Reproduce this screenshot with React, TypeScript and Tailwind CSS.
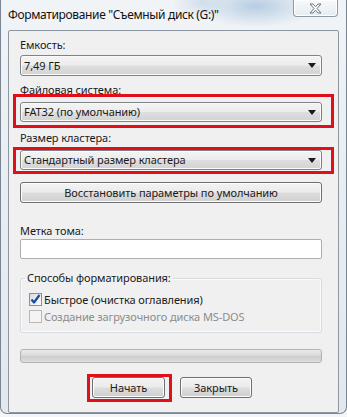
const font = "font-['Noto_Sans',_'Liberation_Sans',_sans-serif] text-[11px] tracking-[-0.1px] leading-[14px] text-[#1b1b1b]";

const Combo = ({ value, h = "h-[20px]" }: { value: string; h?: string }) => (
  <div
    className={`${h} flex items-center justify-between rounded-[3px] border border-[#7f8388] bg-[linear-gradient(#f4f4f4,#ececec_48%,#dedede_52%,#d3d3d3)] pl-[3px] pr-[5px] shadow-[inset_0_0_0_1px_#fafafa]`}
  >
    <span>{value}</span>
    <svg width="8" height="5" viewBox="0 0 8 5">
      <path d="M0 0h8L4 5z" fill="#1a1a1a" />
    </svg>
  </div>
);

const Button = ({ label, className = "" }: { label: string; className?: string }) => (
  <div
    className={`flex h-[21px] items-center justify-center rounded-[3px] border border-[#707070] bg-[linear-gradient(#f3f3f3,#ebebeb_48%,#dddddd_52%,#cfcfcf)] shadow-[inset_0_0_0_1px_#fcfcfc] ${className}`}
  >
    {label}
  </div>
);

const Check = ({ checked, disabled }: { checked?: boolean; disabled?: boolean }) => (
  <div
    className={`flex h-[13px] w-[13px] items-center justify-center border ${
      disabled ? "border-[#b8b8b8] bg-[#f4f4f4]" : "border-[#8e8f8f] bg-[linear-gradient(135deg,#dcdcdc,#fdfdfd)]"
    }`}
  >
    {checked && (
      <svg width="11" height="11" viewBox="0 0 11 11">
        <path d="M1.5 5.5l2.5 3 5.5-7.5" fill="none" stroke="#1c4ba6" strokeWidth="2.2" strokeLinejoin="round" />
      </svg>
    )}
  </div>
);

const App = () => {
  return (
    <div className={`h-[417px] w-[347px] overflow-hidden bg-[#f3f5f8] ${font}`}>
      <div className="flex h-[414px] flex-col rounded-b-[7px] border-x border-b border-[#7a8592] bg-[radial-gradient(ellipse_60px_22px_at_255px_6px,#b7cde3,transparent),radial-gradient(ellipse_30px_18px_at_200px_2px,#d3e0ec,transparent),linear-gradient(#f1f4f7,#e9eef3_40%,#e2e8ee)]">
        <div className="flex h-[30px] items-start justify-between">
          <div className="ml-[7px] mt-[8px] text-[12px] tracking-[-0.35px] text-[#111]">
            Форматирование "Съемный диск (G:)"
          </div>
          <div className="mr-[8px] flex h-[17px] w-[45px] items-center justify-center rounded-b-[4px] border-x border-b border-[#8f9aa6] bg-[linear-gradient(#f7f9fb,#e7ecf1)] shadow-[inset_0_0_0_1px_#ffffff]">
            <svg width="13" height="11" viewBox="0 0 13 11">
              <path
                d="M1 1h3l2.5 2.8L9 1h3L8 5.5 12 10H9L6.5 7.2 4 10H1l4-4.5z"
                fill="#ffffff"
                stroke="#6c7580"
                strokeWidth="1"
                strokeLinejoin="round"
              />
            </svg>
          </div>
        </div>

        <div className="mx-[7px] flex flex-1 flex-col rounded-[2px] border border-[#8d97a1] bg-[#f0f0f0] pb-[7px] pl-[11px] pr-[16px] pt-[7px]">
          <div>Емкость:</div>
          <div className="mt-[3px]">
            <Combo value="7,49 ГБ" h="h-[21px]" />
          </div>

          <div className="mt-[7px]">Файловая система:</div>
          <div className="ml-[-7px] mr-[-12px] mt-[-3px] border-[3px] border-[#e0101a] pb-[3px] pl-[4px] pr-[9px] pt-[5px]">
            <Combo value="FAT32 (по умолчанию)" />
          </div>

          <div className="mt-[3px]">Размер кластера:</div>
          <div className="ml-[-7px] mr-[-12px] mt-[2px] border-[3px] border-[#e0101a] pb-[1px] pl-[4px] pr-[9px]">
            <Combo value="Стандартный размер кластера" />
          </div>

          <Button label="Восстановить параметры по умолчанию" className="mt-[8px]" />

          <div className="mt-[21px]">Метка тома:</div>
          <div className="mt-[1px] h-[20px] rounded-[2px] border border-[#abadb3] bg-white" />

          <fieldset className="mt-[12px] rounded-[3px] border border-[#d5dbe0] pb-[7px] pl-[4px] shadow-[inset_0_0_0_1px_#fafafa]">
            <legend className="px-[2px]">Способы форматирования:</legend>
            <div className="ml-[4px] mt-[6px] flex flex-col">
              <div className="flex h-[17px] items-center gap-[2px]">
                <Check checked />
                <span>Быстрое (очистка оглавления)</span>
              </div>
              <div className="flex h-[17px] items-center gap-[2px] text-[#8c8c8c]">
                <Check disabled />
                <span>Создание загрузочного диска MS-DOS</span>
              </div>
            </div>
          </fieldset>

          <div className="mt-[16px] h-[14px] rounded-[3px] border border-[#b3b3b3] bg-[linear-gradient(#eaeaea,#dadada_45%,#cccccc_55%,#dedede)]" />

          <div className="mt-[11px] flex items-start pl-[67px]">
            <div className="border-[3px] border-[#e0101a] pb-[1px] pl-[2px] pr-[4px]">
              <Button label="Начать" className="w-[73px]" />
            </div>
            <Button label="Закрыть" className="ml-[8px] mt-[3px] w-[72px]" />
          </div>
        </div>
      </div>
    </div>
  );
};

export default App;
